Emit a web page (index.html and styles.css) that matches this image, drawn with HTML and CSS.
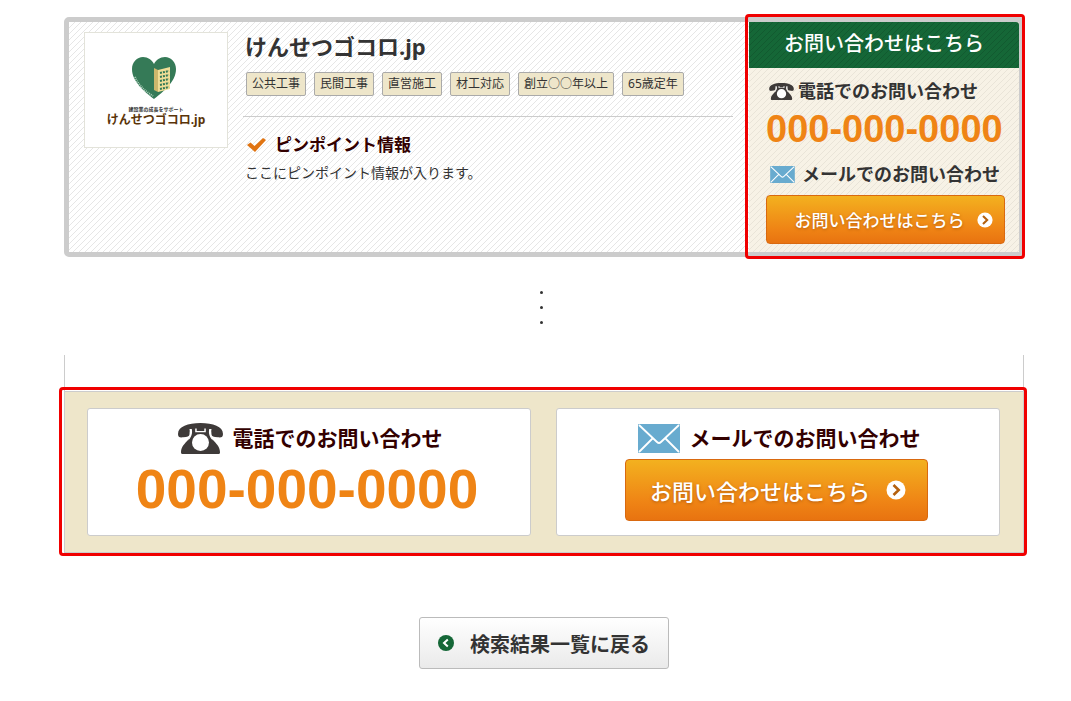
FILE: index.html
```
<!DOCTYPE html>
<html lang="ja">
<head>
  <meta charset="utf-8">
  <title>けんせつゴコロ.jp</title>
  <link rel="stylesheet" href="styles.css">
</head>
<body>

<!-- shared icons -->
<svg class="defs" width="0" height="0" aria-hidden="true">
  <symbol id="tel" viewBox="0 0 45 31">
    <path fill="#3e3a39" d="M22.500 0C10 0 0 3.500 0 11c0 3 1.500 3.700 5 3.300l3-.4c3-.4 3.800-1.600 3.700-4.200 0-1.300.3-1.900 1.200-2.300 1 2.600-.4 6.600-2.900 9.600C7 20.600 3 23.500 3 29.200c0 1.200.5 1.800 1.500 1.800h36c1 0 1.500-.6 1.500-1.800 0-5.700-4-8.600-7-12.200-2.500-3-3.900-7-2.900-9.600.9.400 1.200 1 1.200 2.300-.1 2.600.7 3.800 3.700 4.200l3 .4c3.500.4 5-.3 5-3.300C45 3.500 35 0 22.500 0z"/>
    <path fill="#fff" d="M17.200 5.500h1.500v2.600h7.600V5.500h1.500v3.700H17.200zM11.500 6h2.300c1 5-.8 8.500-3.600 11.500 1.200-3 2.300-6 1.300-11.500zM33.500 6h-2.300c-1 5 .8 8.500 3.600 11.500-1.200-3-2.300-6-1.300-11.500z"/>
    <circle cx="22.500" cy="19.500" r="8.500" fill="#fff"/>
  </symbol>
  <symbol id="mail" viewBox="0 0 42 29">
    <rect width="42" height="29" rx="1" fill="#68abcf"/>
    <path d="M1 1l18 17q2 2 4 0L41 1M1 28l14-14M41 28L27 14" fill="none" stroke="#fff" stroke-width="1.800"/>
  </symbol>
  <symbol id="next" viewBox="0 0 20 20">
    <circle cx="10" cy="10" r="9.500" fill="#fff"/>
    <path d="M7.500 5l5.200 5-5.200 5" fill="none" stroke="#b4610f" stroke-width="2.600"/>
  </symbol>
</svg>

<main class="page">

  <section class="card">
    <div class="logo">
      <svg class="heart" viewBox="0 0 44 42" aria-hidden="true">
        <path fill="#357a57" d="M22 42C13 35 0 25 0 12 0 5 5 0 11 0c5 0 9 3 11 7 2-4 6-7 11-7 6 0 11 5 11 12 0 13-13 23-22 30z"/>
        <path fill="#cdb76c" d="M22 11l4 2v22l-4-2z"/>
        <path fill="#f0dd96" d="M26 13l12-3v22l-12 3z"/>
        <path stroke="#357a57" stroke-width="2" stroke-dasharray="2 1" fill="none" d="M28 16l9-2M28 20l9-2M28 24l9-2M28 28l9-2M28 32l9-2"/>
        <path stroke="#a9cbb8" stroke-width="2" stroke-dasharray="1 1" fill="none" d="M3 20c4 9 10 14 18 19"/>
      </svg>
      <span class="logo-lead">建設業の成長をサポート</span>
      <span class="logo-name">けんせつゴコロ.jp</span>
    </div>

    <div class="info">
      <h1 class="name">けんせつゴコロ.jp</h1>
      <ul class="tags">
        <li>公共工事</li>
        <li>民間工事</li>
        <li>直営施工</li>
        <li>材工対応</li>
        <li>創立○○年以上</li>
        <li>65歳定年</li>
      </ul>
      <div class="point">
        <h2 class="point-title">
          <svg class="check" viewBox="0 0 19 14" aria-hidden="true"><path fill="#e07412" d="M0 7l3.500-2.500L7.500 8 16 0l3 2L8 14z"/></svg>
          ピンポイント情報
        </h2>
        <p class="point-text">ここにピンポイント情報が入ります。</p>
      </div>
    </div>

    <aside class="contact marked">
      <h2 class="contact-head">お問い合わせはこちら</h2>
      <div class="contact-body">
        <p class="label"><svg class="tel"><use href="#tel"/></svg>電話でのお問い合わせ</p>
        <p class="number">000-000-0000</p>
        <p class="label"><svg class="mail"><use href="#mail"/></svg>メールでのお問い合わせ</p>
        <button class="btn" type="button">お問い合わせはこちら<svg class="next"><use href="#next"/></svg></button>
      </div>
    </aside>
  </section>

  <div class="dots"><i></i><i></i><i></i></div>

  <div class="rest"></div>
  <section class="bottom marked">
    <div class="box">
      <p class="label"><svg class="tel"><use href="#tel"/></svg>電話でのお問い合わせ</p>
      <p class="number">000-000-0000</p>
    </div>
    <div class="box">
      <p class="label"><svg class="mail"><use href="#mail"/></svg>メールでのお問い合わせ</p>
      <button class="btn" type="button">お問い合わせはこちら<svg class="next"><use href="#next"/></svg></button>
    </div>
  </section>

  <button class="back" type="button">
    <svg class="prev" viewBox="0 0 16 16" aria-hidden="true">
      <circle cx="8" cy="8" r="8" fill="#156737"/>
      <path d="M9.800 4.500L6 8l3.800 3.500" fill="none" stroke="#fff" stroke-width="2"/>
    </svg>
    検索結果一覧に戻る
  </button>

</main>
</body>
</html>
```
FILE: styles.css
```
* {
  box-sizing: border-box;
  margin: 0;
  padding: 0;
}

body {
  background: #fff;
  color: #333;
  font-family: "Noto Sans", "Noto Sans CJK JP", sans-serif;
}

button {
  font-family: inherit;
  cursor: pointer;
}

svg {
  flex: none;
}

.defs {
  position: absolute;
}

.page {
  padding: 17px 47px 32px 64px;
}

/* red frame around the contact areas */
.marked {
  position: relative;
}

.marked::after {
  content: "";
  position: absolute;
  border: 3px solid #f00000;
  border-radius: 4px;
  pointer-events: none;
}

/* diagonal stripes, one per 6px tile */
.card,
.contact,
.contact-head {
  background-image: linear-gradient(135deg, transparent 44%, var(--stripe) 44% 56%, transparent 56%);
  background-size: 6px 6px;
}

/* company card */
.card {
  --stripe: #e6e6e6;
  display: flex;
  border: 5px solid #ccc;
  border-radius: 5px;
  background-color: #fff;
}

.logo {
  display: flex;
  flex-direction: column;
  align-items: center;
  flex: none;
  width: 144px;
  height: 116px;
  margin: 10px 0 0 15px;
  padding-top: 24px;
  border: 1px solid #e3e3da;
  background: #fff;
}

.heart {
  width: 44px;
  height: 42px;
  margin: 0 4px 6px 0;
}

.logo-lead {
  color: #333;
  font-size: 5px;
  font-weight: bold;
  line-height: 8px;
}

.logo-name {
  color: #5a3408;
  font-size: 12px;
  font-weight: bold;
  line-height: 14px;
}

.info {
  flex: 1;
  padding: 9px 16px 0 15px;
}

.name {
  padding-left: 2px;
  font-size: 22px;
  line-height: 30px;
}

.tags {
  display: flex;
  gap: 8px;
  margin: 11px 0 20px;
  padding-left: 3px;
  list-style: none;
}

.tags li {
  padding: 0 5px;
  border: 1px solid #aaa;
  border-radius: 2px;
  background: #eee6ca;
  font-size: 12px;
  line-height: 22px;
  white-space: nowrap;
}

.point {
  padding: 16px 2px 0;
  border-top: 1px solid #ccc;
}

.point-title {
  display: flex;
  align-items: center;
  gap: 9px;
  color: #300;
  font-size: 17px;
  line-height: 24px;
}

.check {
  width: 19px;
  height: 14px;
  margin-left: 2px;
}

.point-text {
  margin-top: 4px;
  font-size: 14px;
  line-height: 24px;
}

.contact {
  --stripe: #e9e4d8;
  flex: none;
  width: 270px;
  background-color: #f7f2e6;
}

.contact::after {
  inset: -8px -6px -7px -4px;
}

.contact-head {
  --stripe: #125a30;
  border-top-right-radius: 3px;
  background-color: #156737;
  color: #fff;
  font-size: 20px;
  font-weight: 500;
  line-height: 44px;
  padding-bottom: 2px;
  text-align: center;
}

.contact-body {
  padding: 10px 14px 8px 17px;
}

.label {
  display: flex;
  align-items: center;
  font-weight: bold;
}

.contact .label {
  gap: 4px;
  padding-left: 3px;
  font-size: 18px;
  line-height: 26px;
}

.contact .tel {
  width: 25px;
  height: 17px;
}

.contact .mail {
  width: 27px;
  height: 17px;
  margin-right: 2px;
}

.number {
  color: #ef8415;
  font-family: "Liberation Sans", Arial, sans-serif;
  font-weight: bold;
  text-align: center;
  white-space: nowrap;
}

.contact .number {
  margin: 0 4px 7px 0;
  font-size: 38px;
  line-height: 50px;
}

.btn {
  display: flex;
  align-items: center;
  justify-content: center;
  border: 1px solid #d9690f;
  border-radius: 4px;
  background: linear-gradient(#f3b11f, #ef8415 70%, #e87310);
  color: #fff;
  font-weight: 500;
  text-shadow: 0 1px 3px #b85f0e;
}

.contact .btn {
  gap: 12px;
  width: 100%;
  height: 49px;
  margin-top: 8px;
  padding-left: 16px;
  font-size: 17px;
}

.contact .next {
  width: 16px;
  height: 16px;
}

/* lead-down dots */
.dots {
  display: flex;
  flex-direction: column;
  align-items: center;
  gap: 12px;
  padding: 34px 6px 31px 0;
}

.dots i {
  width: 3px;
  height: 3px;
  border-radius: 50%;
  background: #333;
}

/* bottom contact panel */
.rest {
  height: 36px;
  border: solid #ccc;
  border-width: 0 1px;
}

.bottom {
  display: flex;
  gap: 25px;
  padding: 16px 23px 16px 22px;
  border: 1px solid #ccc;
  background: #eee6ca;
}

.bottom::after {
  inset: -5px -4px -4px -6px;
}

.box {
  flex: 1;
  display: flex;
  flex-direction: column;
  align-items: center;
  height: 128px;
  padding: 9px 4px 0 0;
  border: 1px solid #ccc;
  border-radius: 3px;
  background: #fff;
}

.bottom .label {
  gap: 10px;
  padding-left: 6px;
  color: #300;
  font-size: 21px;
  line-height: 41px;
}

.bottom .tel {
  width: 45px;
  height: 31px;
}

.bottom .mail {
  width: 42px;
  height: 29px;
}

.bottom .number {
  font-size: 55px;
  line-height: 60px;
}

.bottom .btn {
  gap: 16px;
  width: 303px;
  height: 62px;
  padding-left: 4px;
  font-size: 22px;
}

.bottom .next {
  width: 20px;
  height: 20px;
}

/* back to the result list */
.back {
  display: flex;
  align-items: center;
  justify-content: center;
  gap: 16px;
  width: 250px;
  height: 52px;
  margin: 64px auto 0;
  border: 1px solid #bbb;
  border-radius: 3px;
  background: linear-gradient(#fff, #eaeaea);
  color: #333;
  font-size: 20px;
  font-weight: bold;
}

.prev {
  width: 16px;
  height: 16px;
}
```
